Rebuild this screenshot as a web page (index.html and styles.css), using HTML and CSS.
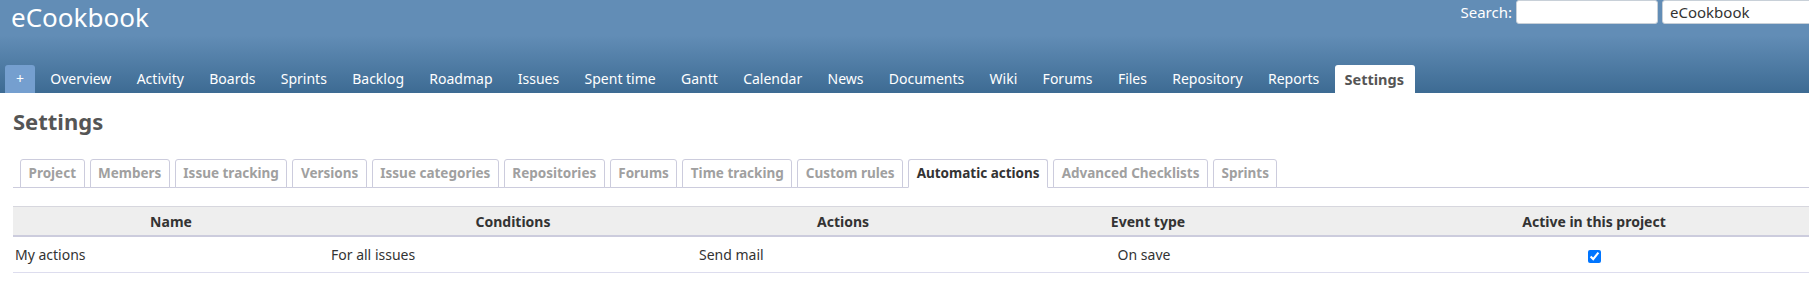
FILE: index.html
```html
<!DOCTYPE html>
<html>
<head>
<meta charset="utf-8">
<title>Settings - eCookbook</title>
<link rel="stylesheet" href="styles.css">
</head>
<body>
<div class="header">
  <div class="header-top">
    <h1 class="site-title">eCookbook</h1>
    <div class="quick-search">
      <label class="search-label">Search:</label>
      <input class="search-input" type="text">
      <div class="project-jump">eCookbook</div>
    </div>
  </div>
  <ul class="main-menu">
    <li class="new-object">+</li>
    <li>Overview</li>
    <li>Activity</li>
    <li>Boards</li>
    <li>Sprints</li>
    <li>Backlog</li>
    <li>Roadmap</li>
    <li>Issues</li>
    <li>Spent time</li>
    <li>Gantt</li>
    <li>Calendar</li>
    <li>News</li>
    <li>Documents</li>
    <li>Wiki</li>
    <li>Forums</li>
    <li>Files</li>
    <li>Repository</li>
    <li>Reports</li>
    <li class="selected">Settings</li>
  </ul>
</div>
<div class="content">
  <h2 class="page-title">Settings</h2>
  <ul class="tabs">
    <li>Project</li>
    <li>Members</li>
    <li>Issue tracking</li>
    <li>Versions</li>
    <li>Issue categories</li>
    <li>Repositories</li>
    <li>Forums</li>
    <li>Time tracking</li>
    <li>Custom rules</li>
    <li class="selected">Automatic actions</li>
    <li>Advanced Checklists</li>
    <li>Sprints</li>
  </ul>
  <table class="list">
    <colgroup>
      <col class="c-name"><col class="c-cond"><col class="c-act"><col class="c-event"><col class="c-active">
    </colgroup>
    <thead>
      <tr>
        <th>Name</th>
        <th>Conditions</th>
        <th>Actions</th>
        <th>Event type</th>
        <th>Active in this project</th>
      </tr>
    </thead>
    <tbody>
      <tr>
        <td>My actions</td>
        <td>For all issues</td>
        <td>Send mail</td>
        <td class="center event">On save</td>
        <td class="center"><input type="checkbox" checked></td>
      </tr>
    </tbody>
  </table>
</div>
</body>
</html>
```

FILE: styles.css
```css
html, body {
  margin: 0;
  padding: 0;
  overflow: hidden;
}
body {
  font-family: "Noto Sans", "Open Sans", sans-serif;
  font-size: 14px;
  color: #333;
  background: #fff;
  width: 1809px;
  height: 296px;
}
.header {
  height: 93px;
  background: linear-gradient(to bottom, #628db6 0%, #628db6 38%, #3d6b93 100%);
  display: flex;
  flex-direction: column;
  overflow: hidden;
}
.header-top {
  display: flex;
  justify-content: space-between;
  align-items: flex-start;
}
.site-title {
  margin: 0;
  padding: 0 0 0 11px;
  font-size: 26px;
  font-weight: normal;
  line-height: 34px;
  color: #fff;
}
.quick-search {
  display: flex;
  align-items: center;
  gap: 4px;
  margin-top: 0;
  margin-right: -14px;
  color: #fff;
}
.search-label {
  font-size: 15px;
}
.search-input {
  box-sizing: border-box;
  width: 142px;
  height: 24px;
  margin: 0;
  border: 1px solid #c8d0d8;
  border-radius: 3px;
  background: #fff;
}
.project-jump {
  box-sizing: border-box;
  width: 161px;
  height: 24px;
  border: 1px solid #c8d0d8;
  border-radius: 3px;
  background: #fff;
  color: #333;
  font-size: 15px;
  line-height: 22px;
  padding-left: 7px;
}
.main-menu {
  margin: auto 0 0 0;
  padding: 0 0 0 5px;
  list-style: none;
  display: flex;
  gap: 5.3px;
}
.main-menu li {
  height: 28px;
  line-height: 28px;
  padding: 0 10px;
  color: #fff;
  font-size: 14px;
  border-radius: 3px 3px 0 0;
}
.main-menu li.new-object {
  width: 30px;
  box-sizing: border-box;
  padding: 0;
  text-align: center;
  background: #759fcf;
}
.main-menu li.selected {
  background: #fff;
  color: #555;
  font-weight: bold;
  padding: 0 11px 0 10px;
  font-size: 14.5px;
}
.content {
  padding: 0 0 0 13px;
}
.page-title {
  margin: 0;
  padding-top: 15px;
  font-size: 22px;
  line-height: 26px;
  color: #555;
  font-weight: bold;
}
.tabs {
  list-style: none;
  margin: 25px 0 0 0;
  padding: 0 0 0 7px;
  display: flex;
  gap: 5px;
  border-bottom: 1px solid #ccd;
  height: 28px;
}
.tabs li {
  box-sizing: border-box;
  height: 29px;
  line-height: 26px;
  padding: 0 7.5px;
  border: 1px solid #ccd;
  border-radius: 3px 3px 0 0;
  font-size: 13.5px;
  font-weight: bold;
  color: #a0a0a0;
  background: #fff;
}
.tabs li.selected {
  color: #333;
  border-bottom-color: #fff;
}
.list {
  margin-top: 18px;
  border-collapse: collapse;
  table-layout: fixed;
  width: 1868px;
}
.c-name { width: 316px; }
.c-cond { width: 368px; }
.c-act { width: 292px; }
.c-event { width: 318px; }
.c-active { width: 574px; }
.list th {
  background: #eee;
  border-top: 1px solid #d7d7de;
  border-bottom: 2px solid #ccd;
  height: 28px;
  padding: 0;
  font-size: 14px;
  font-weight: bold;
  color: #333;
  text-align: center;
}
.list td {
  height: 35px;
  padding: 0 2px;
  border-bottom: 1px solid #dde;
  text-align: left;
}
.list td.center {
  text-align: center;
}
.list td.event {
  padding-right: 10px;
}
.list td input {
  margin: 0;
  width: 13px;
  height: 13px;
  vertical-align: middle;
}
```
